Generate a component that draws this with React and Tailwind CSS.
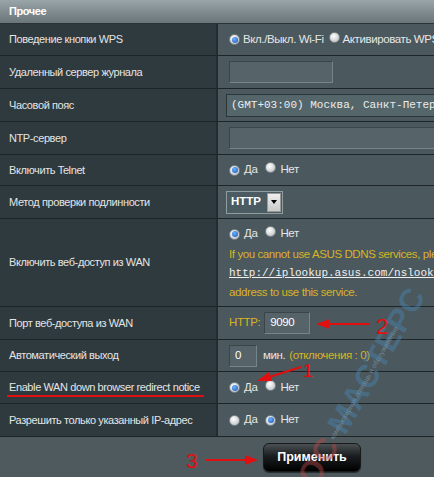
import React from "react";

const Radio = ({ checked }) => (
  <span className="inline-flex items-center justify-center w-[11px] h-[11px] rounded-full border border-[#7d868a] bg-[radial-gradient(circle_at_40%_35%,#ffffff,#c9cdcf_70%,#9aa1a4)] shrink-0">
    {checked && <span className="w-[6px] h-[6px] rounded-full bg-[radial-gradient(circle_at_40%_35%,#6fb0ff,#1457b8)]" />}
  </span>
);

const RadioPair = ({ a, b, checked }) => (
  <div className="flex items-center gap-[4px] text-[11.5px] text-[#e6e6e6]">
    <Radio checked={checked === 0} />
    <span>{a}</span>
    <span className="ml-[4px]"><Radio checked={checked === 1} /></span>
    <span>{b}</span>
  </div>
);

const Row = ({ label, h, children }) => (
  <div className={`flex border-b border-[#1d2528] ${h}`}>
    <div className="w-[218px] shrink-0 bg-[#2f3a3e] border-r-2 border-[#242c2f] flex items-center pl-[9px] text-[11px] text-[#e4e4e4] whitespace-nowrap">
      <span>{label}</span>
    </div>
    <div className="flex-1 bg-[#4b585d] flex items-center pl-[11px] min-w-0 overflow-hidden">
      {children}
    </div>
  </div>
);

const Input = ({ w, value }) => (
  <div className={`${w} h-[22px] bg-[#566469] border border-[#3a4549] border-b-[#75858a] border-r-[#75858a] flex items-center pl-[5px] text-[11.5px] text-white shrink-0`}>
    {value}
  </div>
);

export default function App() {
  return (
    <div className="w-[434px] h-[477px] relative overflow-hidden bg-[#4e5a5e] font-['Liberation_Sans',Arial,sans-serif] tracking-[-0.4px] flex flex-col">
      <div className="h-[24px] shrink-0 bg-[linear-gradient(#9aa5a9,#7c878b_60%,#6b767a)] border-b border-[#2a3235] flex items-center pl-[9px] text-[11px] font-bold text-white">
        Прочее
      </div>

      <Row label="Поведение кнопки WPS" h="h-[32px]">
        <div className="flex items-center gap-[3px] text-[11.5px] text-[#e6e6e6] whitespace-nowrap">
          <Radio checked />
          <span>Вкл./Выкл. Wi-Fi</span>
          <span className="ml-[2px]"><Radio /></span>
          <span>Активировать WPS</span>
        </div>
      </Row>
      <Row label="Удаленный сервер журнала" h="h-[33px]">
        <Input w="w-[104px]" />
      </Row>
      <Row label="Часовой пояс" h="h-[33px]">
        <div className="-ml-[3px] w-[230px] h-[23px] bg-[#55666b] border border-[#2c3639] flex items-center pl-[4px] font-['Liberation_Mono',monospace] tracking-normal text-[11px] text-[#ececec] whitespace-nowrap shrink-0">
          (GMT+03:00) Москва, Санкт-Петербург
        </div>
      </Row>
      <Row label="NTP-сервер" h="h-[33px]">
        <div className="w-[230px] h-[22px] bg-[#566469] border border-[#3a4549] border-b-[#75858a] shrink-0" />
      </Row>
      <Row label="Включить Telnet" h="h-[31px]">
        <RadioPair a="Да" b="Нет" checked={0} />
      </Row>
      <Row label="Метод проверки подлинности" h="h-[33px]">
        <div className="-ml-[3px] w-[57px] h-[23px] border border-[#8f9ca0] bg-[#4a5b61] flex items-center shrink-0">
          <span className="pl-[4px] text-[11.5px] font-bold text-white flex-1 tracking-normal">HTTP</span>
          <span className="w-[14px] h-[19px] mr-[1px] bg-[linear-gradient(#eeeeee,#c9c9c9)] border border-[#999] flex items-center justify-center">
            <span className="w-0 h-0 border-l-[3px] border-r-[3px] border-t-[4px] border-l-transparent border-r-transparent border-t-black" />
          </span>
        </div>
      </Row>
      <Row label="Включить веб-доступ из WAN" h="h-[88px]">
        <div className="flex flex-col gap-[3px] whitespace-nowrap">
          <RadioPair a="Да" b="Нет" checked={0} />
          <div className="text-[11.5px] text-[#d8b425] leading-[16px]">If you cannot use ASUS DDNS services, please</div>
          <div className="font-['Liberation_Mono',monospace] tracking-normal text-[11px] text-[#f0f0f0] underline leading-[16px]">http://iplookup.asus.com/nslookup.php</div>
          <div className="text-[11.5px] text-[#d8b425] leading-[16px]">address to use this service.</div>
        </div>
      </Row>
      <Row label="Порт веб-доступа из WAN" h="h-[33px]">
        <div className="flex items-center gap-[4px]">
          <span className="text-[11.5px] text-[#d8b425]">HTTP:</span>
          <Input w="w-[46px]" value="9090" />
        </div>
      </Row>
      <Row label="Автоматический выход" h="h-[32px]">
        <div className="flex items-center gap-[6px] text-[11.5px] whitespace-nowrap">
          <Input w="w-[28px]" value="0" />
          <span className="text-[#e6e6e6]">мин.</span>
          <span className="text-[#d8b425] -ml-[2px]">(отключения : 0)</span>
        </div>
      </Row>
      <Row label="Enable WAN down browser redirect notice" h="h-[32px]">
        <RadioPair a="Да" b="Нет" checked={0} />
      </Row>
      <Row label="Разрешить только указанный IP-адрес" h="h-[33px]">
        <RadioPair a="Да" b="Нет" checked={1} />
      </Row>

      <div className="flex-1 bg-[#4e5a5e] flex items-center pl-[263px]">
        <div className="w-[98px] h-[29px] rounded-[6px] border border-[#1a1a1a] bg-[linear-gradient(#4a5053,#1a1d1f_45%,#000000)] flex items-center justify-center text-[12.5px] font-bold text-white tracking-normal shadow-[0_1px_1px_rgba(0,0,0,0.5)]">
          Применить
        </div>
      </div>

      {/* watermark */}
      <div className="absolute left-[250px] top-[362px] -rotate-[60deg] pointer-events-none whitespace-nowrap text-[32px] font-bold tracking-[1px] opacity-45">
        <span className="text-[#b84848]">ОС </span>
        <span className="text-[#4a86b3]">МАСТЕРС</span>
      </div>
      <div className="absolute left-[300px] top-[378px] -rotate-[60deg] pointer-events-none whitespace-nowrap text-[7px] tracking-normal text-[#8aa4b6] opacity-60">
        компьютерная помощь и обслуживание
      </div>

      {/* annotations */}
      <svg className="absolute inset-0 pointer-events-none" width="434" height="477" viewBox="0 0 434 477">
        <line x1="7" y1="396" x2="204" y2="396" stroke="#e10f0f" strokeWidth="2" />
        <line x1="370" y1="324" x2="326" y2="324" stroke="#e10f0f" strokeWidth="2" />
        <polygon points="316,324 330,319 330,329" fill="#e10f0f" />
        <line x1="301" y1="367" x2="266" y2="378" stroke="#e10f0f" strokeWidth="2" />
        <polygon points="257,381 269,372 272,381" fill="#e10f0f" />
        <line x1="206" y1="460" x2="248" y2="460" stroke="#e10f0f" strokeWidth="2" />
        <polygon points="258,460 245,455 245,465" fill="#e10f0f" />
        <text x="376" y="334" fill="#e10f0f" fontSize="22" fontFamily="Liberation Sans, Arial, sans-serif">2</text>
        <text x="303" y="377" fill="#e10f0f" fontSize="18" fontFamily="Liberation Sans, Arial, sans-serif">1</text>
        <text x="186" y="468" fill="#e10f0f" fontSize="21" fontFamily="Liberation Sans, Arial, sans-serif">3</text>
      </svg>
    </div>
  );
}
